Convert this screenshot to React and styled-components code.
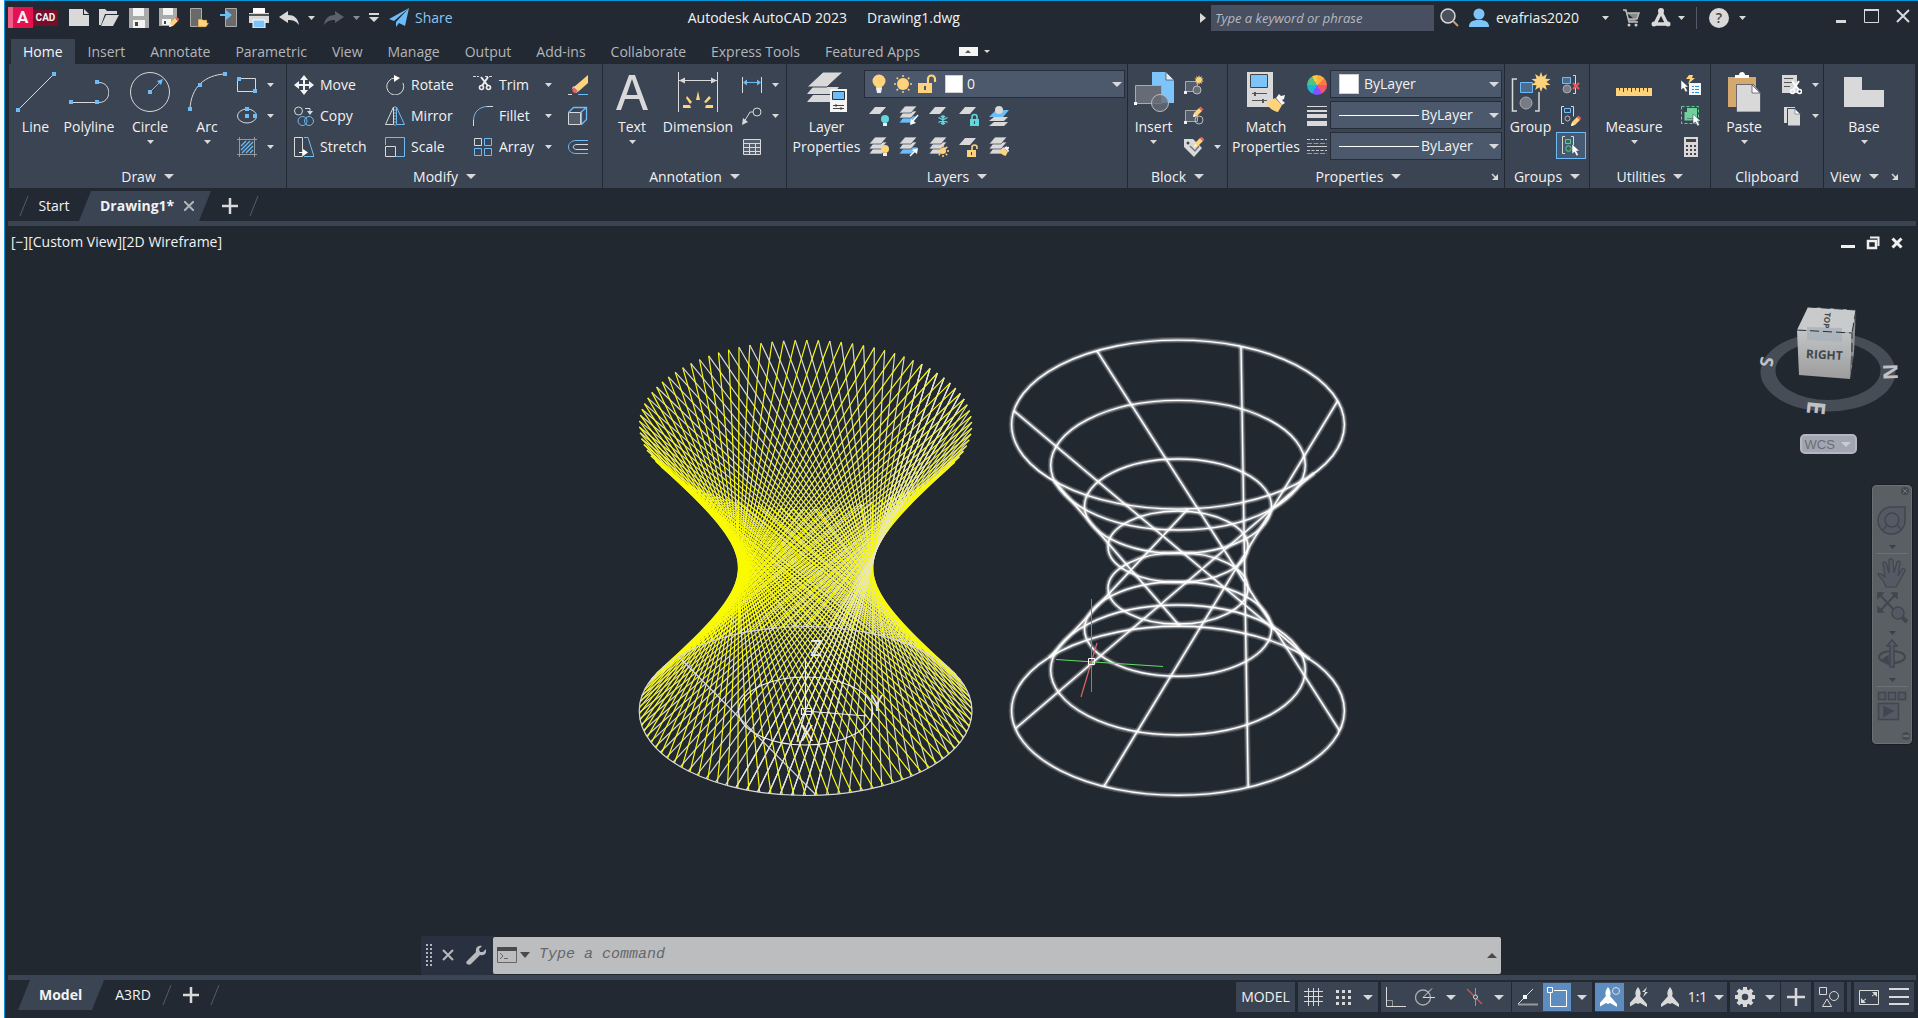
import React, { useState } from 'react';
import styled, { createGlobalStyle, css } from 'styled-components';

const GlobalStyle = createGlobalStyle`
	* { box-sizing: border-box; }
	body {
		margin: 0;
		background: #f8f8f8;
		color: #f2f2f2;
		font-family: "Open Sans", "Noto Sans", sans-serif;
		font-size: 14px;
		line-height: 20px;
	}
	button, input, select { font: inherit; color: inherit; }
	svg { display: block; flex: none; }
`;

const L = '#d9d9d9';
const B = '#6cbcf7';
const Y = '#ffd37c';

/* ---------- layout ---------- */

const Shell = styled.div`
	display: flex;
	flex-direction: column;
	min-height: 100vh;
	margin-left: 4px;
	border-left: 1px solid #0696d7;
	border-top: 1px solid #0696d7;
	background: #222933;
`;

const Row = styled.div`
	display: flex;
	align-items: center;
`;

const Button = styled.button`
	display: flex;
	align-items: center;
	justify-content: center;
	flex: none;
	padding: 0;
	border: 0;
	background: none;
	width: ${(p) => (p.$w ? p.$w + 'px' : 'auto')};
	height: ${(p) => (p.$h ? p.$h + 'px' : 'auto')};
	cursor: pointer;
	white-space: nowrap;
	&:hover { filter: brightness(1.15); }
`;

/* ---------- title bar ---------- */

const TitleBar = styled.header`
	display: flex;
	align-items: center;
	height: 38px;
	padding: 0 0 4px 3px;
`;

const Logo = styled.div`
	display: flex;
	width: 50px;
	height: 22px;
	margin-right: 6px;
	font-weight: 700;
	font-family: Roboto, sans-serif;
`;

const LogoA = styled.span`
	width: 25px;
	height: 21px;
	padding-left: 4px;
	background: #e51050;
	border-left: 5px solid #ee5c87;
	font-size: 17px;
	line-height: 21px;
`;

const LogoCad = styled.span`
	width: 25px;
	height: 16px;
	margin-top: 3px;
	background: #750e2b;
	font-size: 10px;
	line-height: 16px;
	text-align: center;
`;

const ShareButton = styled(Button)`
	gap: 6px;
	margin-left: 5px;
	color: #8ac6f5;
`;

const TitleText = styled.div`
	flex: 1;
	display: flex;
	justify-content: center;
	gap: 20px;
	white-space: nowrap;
`;

const SearchBox = styled.input`
	width: 223px;
	height: 26px;
	padding: 0 4px;
	border: 0;
	background: #474f61;
	font-size: 13px;
	&::placeholder { color: #b5b9c0; font-style: italic; opacity: 1; }
`;

const UserButton = styled(Button)`
	justify-content: flex-start;
	gap: 7px;
	padding-left: 5px;
`;

const TitleRule = styled.span`
	width: 1px;
	height: 22px;
	margin: 0 7px;
	background: #545b68;
`;

const AppWindowButtons = styled.div`
	display: flex;
	margin: 0 0 4px 75px;
`;

/* ---------- ribbon ---------- */

const RibbonTabs = styled.nav`
	display: flex;
	gap: 1px;
	height: 25px;
	padding-left: 6px;
`;

const RibbonTab = styled(Button)`
	padding: 0 12px;
	color: ${(p) => (p.$active ? '#f5f5f5' : '#b3b6ba')};
	background: ${(p) => (p.$active ? '#3b4453' : 'none')};
`;

const RibbonToggle = styled(Button)`
	margin-left: 26px;
`;

const TabToggle = styled.span`
	display: flex;
	align-items: center;
	justify-content: center;
	width: 19px;
	height: 9px;
	background: #f4f4f4;
`;

const Ribbon = styled.div`
	display: flex;
	height: 124px;
	margin: 0 3px 0 4px;
	background: #3b4453;
`;

const PanelBox = styled.section`
	display: flex;
	flex-direction: column;
	flex: ${(p) => (p.$w ? `0 0 ${p.$w}px` : '1')};
	border-right: ${(p) => (p.$w ? '1px solid #222933' : '0')};
`;

const PanelBody = styled.div`
	display: flex;
	height: 101px;
	padding: 5px 0 0 ${(p) => p.$pad || 0}px;
`;

const PanelTitle = styled.div`
	display: flex;
	align-items: center;
	justify-content: center;
	height: 23px;
	gap: 8px;
	padding-right: ${(p) => (p.$inset ? 10 : 0)}px;
`;

const Launcher = styled(Button)`
	margin-left: ${(p) => (p.$push ? 'auto' : '4px')};
	margin-right: ${(p) => (p.$push ? '5px' : '0')};
`;

const PushLeft = styled.span`
	margin-left: auto;
	padding-left: 6px;
`;

const BigBox = styled.button`
	display: flex;
	flex-direction: column;
	align-items: center;
	flex: none;
	width: ${(p) => p.$w}px;
	height: 95px;
	padding: 3px 0 0;
	border: 0;
	background: none;
	cursor: pointer;
	line-height: 20px;
	white-space: nowrap;
	span { margin: 5px 0 3px; }
`;

const Column = styled.div`
	display: flex;
	flex-direction: column;
	width: ${(p) => (p.$w ? p.$w + 'px' : 'auto')};
	margin-left: ${(p) => p.$ml || 0}px;
`;

const Cell = styled(Button)`
	width: ${(p) => p.$w || 30}px;
	height: 31px;
`;

const ActiveCell = styled(Cell)`
	height: 27px;
	margin-top: 1px;
	background: #475a73;
	border: 1px solid #6cbcf7;
`;

const ToolGrid = styled.div`
	display: grid;
	grid-template-columns: 91px 88px 67px 28px 20px;
	grid-auto-rows: 31px;
`;

const Tool = styled(Button)`
	justify-content: flex-start;
	gap: 6px;
`;

const Combo = styled.div`
	position: relative;
	display: flex;
	align-items: center;
	width: ${(p) => p.$w}px;
	height: 28px;
	margin: 1px 0 2px;
	border: 1px solid #262d38;
	background: #4c586b;
	> *:not(select) { pointer-events: none; }
`;

const Select = styled.select`
	position: absolute;
	inset: 0;
	width: 100%;
	padding: 0 22px 0 ${(p) => p.$pad}px;
	border: 0;
	appearance: none;
	background: transparent;
	option { background: #3b4453; }
`;

const ComboArrow = styled.span`
	margin-left: auto;
	margin-right: 2px;
`;

const Swatch = styled.span`
	width: ${(p) => p.$s}px;
	height: ${(p) => p.$s}px;
	margin-left: 8px;
	background: #fff;
	border: 1px solid #d0d0d0;
`;

const Sample = styled.span`
	width: 80px;
	height: 1px;
	margin-left: 8px;
	background: #fff;
`;

const ComboIcons = styled.div`
	display: flex;
	gap: 4px;
	padding-left: 4px;
`;

const Wheel = styled.span`
	width: 20px;
	height: 20px;
	border-radius: 50%;
	background: conic-gradient(#ffb13d 0 45deg, #ff7a45 45deg 90deg, #f0566e 90deg 150deg, #8a4dff 150deg 210deg, #19b5d8 210deg 270deg, #4cc38a 270deg 330deg, #ffc93d 330deg);
`;

/* ---------- file tabs ---------- */

const FileTabs = styled.nav`
	display: flex;
	align-items: center;
	height: 33px;
	padding: 3px 0 0 14px;
`;

const SlantTab = styled.div`
	display: flex;
	align-items: center;
	height: 30px;
	width: ${(p) => p.$w}px;
	padding-left: 21px;
	gap: 10px;
	font-weight: 700;
	background: #3b4453;
	clip-path: polygon(12px 0, 100% 0, calc(100% - 12px) 100%, 0 100%);
`;

const Bar = styled.div`
	flex: none;
	height: 5px;
	margin: 0 2px 0 3px;
	background: #3b4453;
`;

/* ---------- viewport ---------- */

const Viewport = styled.main`
	position: relative;
	display: flex;
	flex: 1;
	min-height: 600px;
	background: #212830;
`;

const Canvas = styled.svg`
	flex: 1;
	min-width: 0;
	width: 100%;
`;

const ViewLabel = styled.div`
	position: absolute;
	left: 6px;
	top: 6px;
	white-space: nowrap;
`;

const WindowButtons = styled.div`
	position: absolute;
	right: 9px;
	top: 7px;
	display: flex;
`;

const CubeBox = styled.div`
	position: absolute;
	right: 0;
	top: 74px;
	width: 180px;
	display: flex;
	flex-direction: column;
	align-items: center;
`;

const Wcs = styled.button`
	display: flex;
	align-items: center;
	gap: 6px;
	width: 57px;
	height: 20px;
	margin-top: 16px;
	padding: 0 3px;
	border: 2px solid #b4b6c2;
	border-radius: 5px;
	background: #a3a5b2;
	color: #6a6d76;
	font: 13px "Liberation Sans", sans-serif;
`;

const NavBar = styled.div`
	position: absolute;
	right: 6px;
	top: 259px;
	display: flex;
	flex-direction: column;
	align-items: center;
	width: 40px;
	height: 259px;
	border: 1px solid #6b7072;
	border-radius: 4px;
	background: #595f62;
	box-shadow: 0 0 0 1px #1a1f27;
`;

const CommandLine = styled.div`
	position: absolute;
	left: 416px;
	right: 417px;
	bottom: 0;
	display: flex;
	align-items: center;
	height: 39px;
	padding-bottom: 1px;
	background: linear-gradient(to right, #293040 74px, transparent 74px);
	border-radius: 3px;
`;

const CommandField = styled.label`
	display: flex;
	align-items: center;
	flex: 1;
	height: 37px;
	padding: 0 4px;
	border-radius: 2px;
	background: #bcbdbf;
`;

const CommandInput = styled.input`
	flex: 1;
	min-width: 0;
	margin-left: 6px;
	border: 0;
	outline: 0;
	background: none;
	color: #333;
	font-family: "Liberation Mono", monospace;
	font-size: 15px;
	line-height: 24px;
	&::placeholder { color: #65676a; font-style: italic; opacity: 1; }
`;

/* ---------- status bar ---------- */

const StatusBar = styled.footer`
	display: flex;
	height: 38px;
	padding: 0 4px 0 13px;
`;

const LayoutTabs = styled.nav`
	display: flex;
	flex: 1;
	align-items: center;
	height: 30px;
`;

const StatusGroup = styled.div`
	display: flex;
	height: 30px;
	margin: 2px 0 0 ${(p) => (p.$tight ? 1 : 3)}px;
	min-width: 4px;
	background: #3b4453;
`;

const StatusCell = styled(Button)`
	height: 30px;
	${(p) => p.$on && css`
		height: 28px;
		margin-top: 1px;
		background: #5d8cc0;
	`}
`;

/* ---------- icons ---------- */

const Svg = ({ w = 20, h = w, children }) => (
	<svg width={w} height={h} viewBox={`0 0 ${w} ${h}`} fill="none" stroke="none">{children}</svg>
);

const Tri = ({ w = 7, color = L, up }) => {
	const h = Math.ceil(w / 2);
	return (
		<Svg w={w} h={h}><path fill={color} d={up ? `M0 ${h}H${w}L${w / 2} 0z` : `M0 0H${w}L${w / 2} ${h}z`} /></Svg>
	);
};

const Dot = ({ x, y, c = B }) => <rect x={x - 2} y={y - 2} width="4" height="4" fill={c} />;
const Slab = ({ x = 0, y = 0, c = L }) => <path d={`M${x + 6} ${y}h11l-6 7H${x}z`} fill={c} />;
const Slab3 = ({ colors = [L, L, L] }) => (
	<g>
		<path d="M5 10h14l-6 7H0z" fill={colors[2]} stroke="#3b4453" strokeWidth=".7" />
		<path d="M5 5h13l-6 7H0z" fill={colors[1]} stroke="#3b4453" strokeWidth=".7" />
		<path d="M6 0h12l-6 7H0z" fill={colors[0]} stroke="#3b4453" strokeWidth=".7" />
	</g>
);
const Pencil = ({ x, y }) => (
	<g transform={`translate(${x} ${y})`}>
		<path d="M0 9l1-4 5-5 3 3-5 5z" fill={Y} />
		<path d="M6 0l1.500-1.500 3 3L9 3z" fill="#ef5f5f" />
		<path d="M0 9l1-3 2 2z" fill="#fff" />
	</g>
);
const Cursor = ({ x, y }) => <path transform={`translate(${x} ${y})`} d="M0 0v10l2.500-2 2 4 2-1-2-4h3z" fill="#fff" stroke="#3b4453" strokeWidth=".5" />;
const Bulb = ({ x, y, c = Y }) => (
	<g><circle cx={x} cy={y} r="4" fill={c} /><rect x={x - 2} y={y + 4} width="4" height="3" fill="#eee" /></g>
);
const Sun = ({ x, y, r = 4, c = Y, ray = 3 }) => (
	<g stroke={c} strokeWidth="1.500">
		<circle cx={x} cy={y} r={r} fill={c} stroke="none" />
		{[0, 45, 90, 135, 180, 225, 270, 315].map((a) => (
			<path key={a} d={`M${x + r + 1} ${y}h${ray - 1}`} transform={`rotate(${a} ${x} ${y})`} />
		))}
	</g>
);
const Lock = ({ x, y, c, open }) => (
	<g>
		<path d={open ? `M${x + 5} ${y + 5}v-2.500a2.500 2.500 0 0 1 5 0v1.500` : `M${x + 2} ${y + 5}v-2a2.500 2.500 0 0 1 5 0v2`} stroke={c} strokeWidth="1.600" />
		<path d={`M${x} ${y + 5}h9v7h-9z`} fill={c} />
		<path d={`M${x + 4.5} ${y + 7}v3`} stroke="#3b4453" />
	</g>
);
const Star = ({ x, y, r }) => {
	const pts = [];
	for (let i = 0; i < 20; i++) {
		const a = (i * Math.PI) / 10;
		const q = i % 2 ? r * 0.55 : r;
		pts.push(`${x + q * Math.sin(a)},${y - q * Math.cos(a)}`);
	}
	return <polygon points={pts.join(' ')} fill={Y} />;
};
const Scissors = ({ x = 0, y = 0, c = '#eee' }) => (
	<g transform={`translate(${x} ${y})`} stroke={c} strokeWidth="1.600">
		<path d="M2 0l7 9M9 0L3 9" strokeWidth="2" />
		<circle cx="2.500" cy="10.500" r="2" /><circle cx="9.500" cy="10.500" r="2" />
	</g>
);
const Brush = ({ x, y, s = 1 }) => (
	<g transform={`translate(${x} ${y}) scale(${s})`}>
		<path d="M10 4l3-4 2 2 4-1-1 4-2 1 3 3-3 2z" fill="#f4f4f4" />
		<path d="M9 4l7 7-4 7C7 17 3 14 0 9z" fill={Y} />
	</g>
);

const icons = {
	newFile: <Svg><path d="M0 1h14v6h6v11H0z" fill={L} /><path d="M15 1l5 5h-5z" fill={L} /></Svg>,
	open: <Svg><path d="M0 17V1h6l2 2h10v3H6L2 17z" fill={L} /><path d="M7 7h13l-6 11H2z" fill={L} /></Svg>,
	save: <Svg><path d="M0 0h20v20H0z" fill="#aaa" /><path d="M4 0h11v8H4zM4 12h12v8H4z" fill="#f4f4f4" /><path d="M6 14h3v4H6z" fill="#444" /></Svg>,
	saveAs: <Svg><path d="M0 0h18v10l-8 8H0z" fill="#aaa" /><path d="M4 0h10v7H4zM3 11h9v6H3z" fill="#f4f4f4" /><path d="M5 13h2v3H5z" fill="#444" /><Pencil x={10} y={10} /></Svg>,
	openMobile: <Svg><path d="M1.500.500h11v18h-11z" fill="#6a6a6a" stroke="#aaa" /><path d="M9 19v-8h4l1 1h4v3h2l-3 4z" fill={Y} stroke="#7a5a20" strokeWidth=".5" /></Svg>,
	saveMobile: <Svg><path d="M6.500.500h11v18h-11z" fill="#6a6a6a" stroke="#aaa" /><path d="M1 6h6V2l6 5-6 5V8H1z" fill={B} /></Svg>,
	print: <Svg><path d="M4 0h12v5H4z" fill="#fff" /><path d="M0 5h20v10H0z" fill={L} /><path d="M0 6h20v2H0z" fill="#555" /><path d="M4 12h12v8H4z" fill="#7cc4fa" stroke="#fff" /></Svg>,
	undo: <Svg><path d="M0 9l9-6v4c6 0 10 3 11 10-3-4-6-5-11-5v3z" fill={L} /></Svg>,
	redo: <Svg><path d="M20 9l-9-6v4C5 7 1 10 0 17c3-4 6-5 11-5v3z" fill="#5c6069" /></Svg>,
	customize: <Svg w={10} h={10}><path d="M0 0h10v2H0zM0 4h10L5 9z" fill={L} /></Svg>,
	plane: <Svg><path d="M20 0L0 11l5 2zM20 0L7 14v5l3-4 6 3z" fill={B} /></Svg>,
	magnifier: <Svg><circle cx="9" cy="8" r="7" fill="#4b515c" stroke={L} strokeWidth="1.500" /><path d="M14 13l5 5" stroke="#c9a36a" strokeWidth="2" /></Svg>,
	user: <Svg><circle cx="10" cy="6" r="5.500" fill="#7cc4fa" /><path d="M0 19c0-5 3-6 7-7h6c4 1 7 2 7 7z" fill="#7cc4fa" /></Svg>,
	cart: <Svg><path d="M2 2h3l3 12h9M5 5h13l-2 6H7" stroke="#bbb" fill="#888" strokeWidth="1.500" /><circle cx="8" cy="17" r="1.500" fill="#ccc" /><circle cx="15" cy="17" r="1.500" fill="#ccc" /></Svg>,
	appStore: <Svg><path d="M10 4l6 12H4z" stroke={L} strokeWidth="3.500" /><circle cx="10" cy="3" r="3" fill={L} /><circle cx="3" cy="16" r="2.500" fill={L} /><circle cx="17" cy="16" r="2.500" fill={L} /></Svg>,
	minimize: <Svg w={16}><path d="M3 12h10v3H3z" fill={L} /></Svg>,
	maximize: <Svg w={16}><path d="M.5 1.500h14v13H.5z" stroke={L} /><path d="M0 2h15" stroke={L} strokeWidth="2" /></Svg>,
	close: <Svg w={16}><path d="M2 2l12 12M14 2L2 14" stroke={L} strokeWidth="2" /></Svg>,

	line: <Svg w={40}><path d="M2 38L38 2" stroke={L} /><Dot x={2} y={38} /><Dot x={38} y={2} /></Svg>,
	polyline: <Svg w={40}><path d="M2 30.500h26M30 30.500c13 0 13-20 0-20" stroke={L} /><Dot x={2} y={30} /><Dot x={28} y={30} /><Dot x={28} y={10} /></Svg>,
	circle: <Svg w={40}><circle cx="20" cy="20" r="19.500" stroke={L} /><path d="M20 20l9-9" stroke={B} /><path d="M33 7l-2 6-4-4z" fill={B} /><Dot x={20} y={20} /></Svg>,
	arc: <Svg w={40}><path d="M3 37C4 15 18 3 38 2" stroke={L} /><Dot x={3} y={37} /><Dot x={13} y={13} /><Dot x={38} y={2} /></Svg>,
	rect: <Svg><path d="M.5 3.500h18v13H.5z" stroke={L} /><Dot x={2} y={4} /><Dot x={18} y={16} /></Svg>,
	ellipse: <Svg><ellipse cx="10" cy="10" rx="9.500" ry="7" stroke={L} /><Dot x={10} y={10} /><Dot x={10} y={3} /><Dot x={18} y={10} /></Svg>,
	hatch: <Svg><path d="M0 2.500h20M0 17.500h20M2.500 0v20M17.500 0v20" stroke="#999" /><path d="M4 9l5-5M4 13l9-9M5 16L16 5M9 16l7-7M13 16l3-3" stroke={B} strokeWidth="1.300" /></Svg>,
	move: <Svg><path d="M10 0l4 5h-3v4h4V6l5 4-5 4v-3h-4v4h3l-4 5-4-5h3v-4H5v3l-5-4 5-4v3h4V5H6z" fill="#f4f4f4" /></Svg>,
	copy: <Svg><circle cx="4.500" cy="5" r="4" stroke={L} /><path d="M11 2.500h5V6" stroke={L} /><path d="M13 5h6l-3 4z" fill={L} /><circle cx="8.500" cy="15" r="4.500" stroke={B} /><circle cx="15" cy="15" r="4.500" stroke={B} /></Svg>,
	stretch: <Svg><path d="M.5.500h8v19h-8z" stroke={L} /><path d="M10 .5h4l6 19H10" stroke={B} /><path d="M5 15.500h6" stroke="#fff" /><path d="M9 12l5 3.500L9 19z" fill="#fff" /></Svg>,
	rotate: <Svg><path d="M10 3a8.500 8.500 0 1 0 8 5" stroke={L} /><path d="M9 0l6 3-6 4z" fill="#fff" /></Svg>,
	mirror: <Svg><path d="M8.500 1v17.500H.5z" stroke={L} /><path d="M11.500 1v17.500h8z" stroke={B} /><path d="M10 0v20" stroke="#aaa" strokeDasharray="2 1" /></Svg>,
	scale: <Svg><path d="M.5 8V.5h19v19H11" stroke={B} /><path d="M.5 9.500h10v10H.5z" stroke={L} /></Svg>,
	trim: <Svg><path d="M0 1.500h6M12 1.500h8" stroke={L} strokeDasharray="3 1" /><Scissors x={6} y={2} /></Svg>,
	fillet: <Svg><path d="M.5 20v-6" stroke={L} /><path d="M.5 14C1 5 7 1 14 .5" stroke={B} /><path d="M14 .500h6" stroke={L} /></Svg>,
	array: <Svg><path d="M1.500 1.500h7v7h-7z" stroke={L} /><path d="M11.500 1.500h7v7h-7zM1.500 11.500h7v7h-7zM11.500 11.500h7v7h-7z" stroke={B} /></Svg>,
	erase: <Svg><path d="M20 0v8l-9 8-5-4z" fill={Y} /><path d="M11 16l-5-5-2 2 4 5z" fill="#f4f4f4" /><path d="M6 12l4 4c-3 4-7 1-5-3z" fill="#ef5f5f" /><path d="M0 19.500h4" stroke={L} /><path d="M10 19.500h10" stroke={B} /></Svg>,
	explode: <Svg><path d="M.5 6.500h12v12H.5z" stroke={L} fill="#565e6b" /><path d="M.5 6.500l5-5h13v12l-5 5M12.500 6.500l6-5M13.500 6v13" stroke={B} strokeWidth="1.300" /></Svg>,
	offset: <Svg><path d="M20 3.500H8c-10 0-10 13 0 13h12" stroke={B} /><path d="M20 7.500H9c-5 0-5 5 0 5h11" stroke={L} /></Svg>,

	textA: <Svg w={40}><path d="M4 38L17 3h6l13 35h-5l-4-11H13L9 38zM14.500 23h11L20 7z" fill={L} fillRule="evenodd" /></Svg>,
	dimension: (
		<Svg w={40}>
			<path d="M.5 0v40M39.500 0v40M1 8.500h38" stroke={L} />
			<path d="M1 8.500l6-3v6zM39 8.500l-6-3v6z" fill={L} />
			<path d="M18 28l2-9 2 9zM14 30l-5-6-1 2 4 6zM26 30l5-6 2 2-5 5zM12 33l-7 0v3l8 0zM28 33l7 0v3h-8z" fill={Y} />
		</Svg>
	),
	dimLinear: <Svg><path d="M.5 2v16M19.500 2v16" stroke={L} /><path d="M2 7.500h16" stroke={B} /><path d="M1 7.500l4-3v6zM19 7.500l-4-3v6z" fill={B} /></Svg>,
	leader: <Svg><circle cx="15" cy="6" r="4" stroke={L} /><path d="M11 6H8L2 16" stroke={L} /><path d="M0 19l1-7 5 4z" fill={L} /></Svg>,
	table: <Svg><path d="M1.500 2.500h17v15h-17z" stroke={L} fill="#565e6b" /><path d="M1 6.500h18M1 10.500h18M1 14.500h18M7.500 7v11M13.500 7v11" stroke={L} /></Svg>,

	layerProps: (
		<Svg w={40}>
			<path d="M0 30l6-7h24l-6 7zM0 22l6-7h26l-6 7z" fill={L} />
			<path d="M0 15L16 0h20L20 15z" fill={L} stroke="#3b4453" />
			<path d="M23 17h17v23H23z" fill="#f4f4f4" />
			<path d="M25.500 19.500h12v8h-12z" fill="#6cbcf7" stroke="#333" />
			<path d="M26 33.500h11M26 36.500h11" stroke="#444" /><path d="M29 32v3M34 35v3" stroke="#444" />
		</Svg>
	),
	bulbBig: <Svg><circle cx="10" cy="7" r="6.500" fill={Y} /><path d="M7 12h6v2H7z" fill={Y} /><path d="M7 14h6l-1 5H8z" fill="#f0f0f0" /></Svg>,
	sunBig: <Svg><Sun x={10} y={10} r={6} ray={3} /></Svg>,
	lockBig: <Svg><path d="M11 9V5a3.500 3.500 0 0 1 7 0v3" stroke={Y} strokeWidth="2.200" /><path d="M1 9h14v10H1z" fill={Y} /><path d="M8 12v4" stroke="#4c586b" strokeWidth="2" /></Svg>,
	layOff: <Svg><Slab y={1} /><Bulb x={16} y={13} c="#62d6de" /></Svg>,
	layIso: <Svg><Slab3 colors={[L, L, B]} /><path d="M19 9l-6 7" stroke="#fff" strokeWidth="1.500" /><path d="M11 19l1-6 5 4z" fill="#fff" /></Svg>,
	layFreeze: <Svg><Slab y={1} /><path d="M14 9v10M9.500 11.500l9 5M18.500 11.500l-9 5M12 10l2 2 2-2M12 18l2-2 2 2" stroke="#62d6de" strokeWidth="1.400" /></Svg>,
	layLock: <Svg><Slab y={1} /><Lock x={11} y={8} c="#62d6de" /></Svg>,
	layCurrent: <Svg><path d="M0 20l5-4h14l-4 4zM0 15l5-4h14l-4 4z" fill={L} /><path d="M0 11l7-7h13l-6 7z" fill={B} /><circle cx="10" cy="4" r="4" fill={L} /></Svg>,
	layOn: <Svg><Slab3 /><Bulb x={16} y={12} /></Svg>,
	layUniso: <Svg><Slab3 colors={[L, L, B]} /><path d="M11 19l5-5" stroke="#fff" strokeWidth="1.500" /><path d="M19 11l-1 6-5-4z" fill="#fff" /></Svg>,
	layThaw: <Svg><Slab3 /><Sun x={14} y={14} r={3} ray={3} /></Svg>,
	layUnlock: <Svg><Slab y={1} /><Lock x={8} y={8} c={Y} open /></Svg>,
	layMatch: <Svg><Slab3 /><Brush x={10} y={9} s={0.55} /></Svg>,

	insert: (
		<Svg w={40}>
			<path d="M18 0h14l8 8v23H18z" fill="#7cc4fa" /><path d="M32 0v8h8z" fill="#dff0fc" stroke="#3b4453" strokeWidth=".7" />
			<path d="M1.500 13.500h26v18h-26z" fill="#666b76" stroke="#aaa" /><path d="M0 30h3v3H0z" fill="#fff" />
			<circle cx="26" cy="31" r="8.500" fill="#666b76" stroke="#bbb" fillOpacity=".8" />
		</Svg>
	),
	blockCreate: <Svg><path d="M1.500 6.500h12v10h-12z" fill="#565e6b" stroke="#aaa" /><circle cx="13" cy="15" r="4" fill="#666b76" stroke="#bbb" /><Star x={15} y={5} r={5} /><path d="M0 16h3v3H0z" fill="#eee" /></Svg>,
	blockEdit: <Svg><path d="M1.500 4.500h12v11h-12z" fill="#565e6b" stroke="#aaa" /><circle cx="15" cy="14" r="4" stroke="#bbb" /><Pencil x={9} y={2} /><path d="M0 15h3v3H0z" fill="#eee" /></Svg>,
	tag: <Svg><path d="M0 2h9l9 9-8 9L0 10z" fill={L} /><circle cx="4" cy="6" r="1.500" fill="#3b4453" /><path d="M6 9l5 5 4-5" stroke="#777" strokeWidth="1.500" /><Pencil x={10} y={1} /></Svg>,

	match: (
		<Svg w={40}>
			<path d="M1 0h26v35H1z" fill={L} /><path d="M4.500 2.500h17v13h-17z" fill="#7cc4fa" stroke="#444" />
			<path d="M6 21.500h15M6 28.500h15" stroke="#555" /><path d="M9 20v4M17 27v4" stroke="#555" strokeWidth="2" /><Brush x={20} y={22} />
		</Svg>
	),
	lineweight: <Svg><path d="M0 0h20v1H0zM0 4h20v2H0zM0 8h20v4H0zM0 15h20v5H0z" fill={L} /></Svg>,
	linetype: <Svg><path d="M0 2.500h20M0 13.500h20" stroke="#ccc" strokeDasharray="3 1.500" /><path d="M0 6.500h20M0 16.500h20" stroke="#999" strokeDasharray="5 1.500" /><path d="M0 9.500h20" stroke="#ccc" /></Svg>,

	group: (
		<Svg w={40}>
			<path d="M6 7H1.500v32H6M24 39h4V20" stroke={L} strokeWidth="1.500" /><path d="M9.500 10.500h12v10h-12z" fill="#4e6d8c" stroke={B} />
			<circle cx="15" cy="31" r="6" fill="#777c86" stroke="#aaa" /><Star x={30} y={10} r={10} />
		</Svg>
	),
	ungroup: <Svg><path d="M1.500 2.500h8v6h-8z" fill="#4e6d8c" stroke={B} /><circle cx="6" cy="14" r="4" fill="#777c86" stroke="#aaa" /><path d="M12 .500h2.500v18H12" stroke={L} /><path d="M12 8l6 6M18 8l-6 6" stroke="#f0555e" strokeWidth="2" /></Svg>,
	groupEdit: <Svg><path d="M3 .500H.5v17H3M10 .500h2.500v10" stroke={L} /><path d="M3.500 2.500h6v4h-6z" stroke={B} /><circle cx="6.500" cy="12.500" r="2.500" stroke="#bbb" /><Pencil x={10} y={11} /></Svg>,
	groupSelect: <Svg><path d="M4 .500H1.500v17H4M10 .500h2.500v9" stroke={L} /><path d="M4.500 3.500h5v4h-5z" fill="#356b56" stroke="#5ed092" /><circle cx="7.500" cy="12.500" r="2.800" fill="#356b56" stroke="#5ed092" /><Cursor x={11} y={8} /></Svg>,

	measure: <Svg w={40}><path d="M2 16h36v8H2z" fill={Y} /><path d="M5.500 16v2.500M9.500 16v4M13.500 16v2.500M17.500 16v4M21.500 16v2.500M25.500 16v4M29.500 16v2.500M33.500 16v4" stroke="#444" /></Svg>,
	quickSelect: <Svg><path d="M8 0h4l-1 3h3L7 9l2-5H5z" fill={Y} /><path d="M8 8h12v12H8z" fill="#f4f4f4" /><path d="M11 11.500h2M11 14.500h2M11 17.500h2M14 11.500h4M14 14.500h4M14 17.500h4" stroke="#2b8fd8" /><Cursor x={0} y={5} /></Svg>,
	selectAll: <Svg><path d="M.5.500h17v17H.5z" stroke="#5ed092" strokeDasharray="3 2" /><path d="M3.500 6v8.500H12v-2H6V6z" fill="#70cf9a" /><path d="M6 2h10v10H6z" fill="#70cf9a" /><Cursor x={12} y={8} /></Svg>,
	calculator: <Svg><path d="M3 0h14v20H3z" fill={L} /><path d="M5 2h10v3H5z" fill="#444" /><path d="M5 8h2v2H5zM9 8h2v2H9zM13 8h2v2h-2zM5 12h2v2H5zM9 12h2v2H9zM13 12h2v2h-2zM5 16h2v2H5zM9 16h2v2H9zM13 16h2v2h-2z" fill="#444" /></Svg>,

	paste: (
		<Svg w={40}>
			<path d="M4 5h28v30H4z" fill="#d5a86e" /><path d="M11 6V3h4c0-4 6-4 6 0h4v3z" fill="#fff" />
			<path d="M12.500 12.500h17l7 8V40h-24z" fill={L} stroke="#3b4453" strokeWidth=".7" /><path d="M28 13v8h8z" fill="#fff" stroke="#3b4453" strokeWidth=".7" />
		</Svg>
	),
	cut: <Svg><path d="M0 0h15v18H0z" fill={L} /><path d="M2 3.500h9M2 7.500h9M2 11.500h6" stroke="#555" /><Scissors x={8} y={6} c="#fff" /></Svg>,
	copyClip: <Svg><path d="M2 1h11v16H2z" fill={L} /><path d="M5.500 2.500h8l5 5V20h-13z" fill={L} stroke="#3b4453" /><path d="M13 3v5h5z" fill="#fff" stroke="#3b4453" strokeWidth=".5" /></Svg>,
	base: <Svg w={40}><path d="M0 5h18v13h22v17H0z" fill={L} /></Svg>,
	launcher: <Svg w={8}><path d="M1 1l4 4" stroke={L} strokeWidth="1.500" /><path d="M7 1v6H1z" fill={L} /></Svg>,

	tabClose: <Svg w={10}><path d="M0 0l10 10M10 0L0 10" stroke="#b0b3b8" strokeWidth="2" /></Svg>,
	plus: <Svg w={16}><path d="M8 0v16M0 8h16" stroke={L} strokeWidth="2.500" /></Svg>,
};

const Slash = () => (
	<Svg w={10} h={20}><path d="M1 20L9 0" stroke="#565d69" /></Svg>
);

/* ---------- ribbon pieces ---------- */

const Panel = ({ title, w, pad, launcher, noArrow, children }) => (
	<PanelBox $w={w}>
		<PanelBody $pad={pad}>{children}</PanelBody>
		<PanelTitle $inset={launcher && !w}>
			{launcher && w ? <PushLeft>{title}</PushLeft> : <span>{title}</span>}
			{!noArrow && <Tri w={10} />}
			{launcher && <Launcher $push={!!w} aria-label={`${title} settings`}>{icons.launcher}</Launcher>}
		</PanelTitle>
	</PanelBox>
);

const Big = ({ icon, label, label2, w, arrow }) => (
	<BigBox $w={w}>
		{icons[icon]}
		<span>{label}{label2 && <><br />{label2}</>}</span>
		{arrow && <Tri />}
	</BigBox>
);

const IconCell = ({ icon, w }) => <Cell $w={w} aria-label={icon}>{icons[icon]}</Cell>;
const ArrowCell = ({ w = 16, label }) => <Cell $w={w} aria-label={label || 'More'}><Tri /></Cell>;

const modifyTools = [
	['move', 'Move'], ['rotate', 'Rotate'], ['trim', 'Trim', 'erase'],
	['copy', 'Copy'], ['mirror', 'Mirror'], ['fillet', 'Fillet', 'explode'],
	['stretch', 'Stretch'], ['scale', 'Scale'], ['array', 'Array', 'offset'],
];

const LayerSelect = () => (
	<Combo $w={261}>
		<ComboIcons>{icons.bulbBig}{icons.sunBig}{icons.lockBig}</ComboIcons>
		<Swatch $s={18} />
		<Select $pad={102} aria-label="Layer" defaultValue="0"><option>0</option></Select>
		<ComboArrow><Tri w={10} /></ComboArrow>
	</Combo>
);

const PropSelect = ({ label, line }) => (
	<Combo $w={172}>
		{line ? <Sample /> : <Swatch $s={20} />}
		<Select $pad={line ? 90 : 33} aria-label={label} defaultValue="ByLayer">
			<option>ByLayer</option>
			<option>ByBlock</option>
		</Select>
		<ComboArrow><Tri w={10} /></ComboArrow>
	</Combo>
);

const HomeRibbon = () => (
	<Ribbon>
		<Panel title="Draw" w={278} pad={0}>
			<Big icon="line" label="Line" w={53} />
			<Big icon="polyline" label="Polyline" w={54} />
			<Big icon="circle" label="Circle" w={68} arrow />
			<Big icon="arc" label="Arc" w={46} arrow />
			<Column $ml={2}>
				{['rect', 'ellipse', 'hatch'].map((i) => (
					<Row key={i}><IconCell icon={i} /><ArrowCell /></Row>
				))}
			</Column>
		</Panel>
		<Panel title="Modify" w={316} pad={7}>
			<ToolGrid>
				{modifyTools.map(([icon, label, extra]) => (
					<React.Fragment key={icon}>
						<Tool>{icons[icon]}{label}</Tool>
						{extra && <ArrowCell label={`${label} options`} />}
						{extra && <IconCell icon={extra} w={20} />}
					</React.Fragment>
				))}
			</ToolGrid>
		</Panel>
		<Panel title="Annotation" w={184} pad={2}>
			<Big icon="textA" label="Text" w={54} arrow />
			<Big icon="dimension" label="Dimension" w={78} />
			<Column>
				<Row><IconCell icon="dimLinear" /><ArrowCell /></Row>
				<Row><IconCell icon="leader" /><ArrowCell /></Row>
				<IconCell icon="table" />
			</Column>
		</Panel>
		<Panel title="Layers" w={341} pad={2}>
			<Big icon="layerProps" label="Layer" label2="Properties" w={75} />
			<Column>
				<LayerSelect />
				<Row>{['layOff', 'layIso', 'layFreeze', 'layLock', 'layCurrent'].map((i) => <IconCell key={i} icon={i} />)}</Row>
				<Row>{['layOn', 'layUniso', 'layThaw', 'layUnlock', 'layMatch'].map((i) => <IconCell key={i} icon={i} />)}</Row>
			</Column>
		</Panel>
		<Panel title="Block" w={100}>
			<Big icon="insert" label="Insert" w={51} arrow />
			<Column>
				<IconCell icon="blockCreate" />
				<IconCell icon="blockEdit" />
				<Row><IconCell icon="tag" /><ArrowCell /></Row>
			</Column>
		</Panel>
		<Panel title="Properties" w={277} launcher>
			<Big icon="match" label="Match" label2="Properties" w={76} />
			<Column $w={26}>
				<Cell $w={26} aria-label="Color"><Wheel /></Cell>
				<IconCell icon="lineweight" w={26} />
				<IconCell icon="linetype" w={26} />
			</Column>
			<Column>
				<PropSelect label="Object color" />
				<PropSelect label="Lineweight" line />
				<PropSelect label="Linetype" line />
			</Column>
		</Panel>
		<Panel title="Groups" w={85}>
			<Big icon="group" label="Group" w={51} />
			<Column>
				<IconCell icon="ungroup" />
				<IconCell icon="groupEdit" />
				<ActiveCell aria-label="groupSelect">{icons.groupSelect}</ActiveCell>
			</Column>
		</Panel>
		<Panel title="Utilities" w={121} pad={6}>
			<Big icon="measure" label="Measure" w={76} arrow />
			<Column $ml={4}>
				<IconCell icon="quickSelect" />
				<IconCell icon="selectAll" />
				<IconCell icon="calculator" />
			</Column>
		</Panel>
		<Panel title="Clipboard" w={113} noArrow>
			<Big icon="paste" label="Paste" w={66} arrow />
			<Column>
				<Row><IconCell icon="cut" /><ArrowCell /></Row>
				<Row><IconCell icon="copyClip" /><ArrowCell /></Row>
			</Column>
		</Panel>
		<Panel title="View" pad={4} launcher>
			<Big icon="base" label="Base" w={72} arrow />
		</Panel>
	</Ribbon>
);

/* ---------- drawing ---------- */

const RX = 166.4;
const RY = 84.5;
const TOP = 424.6;
const BOTTOM = 711;

const rim = (cx, cy, deg) => {
	const a = (deg * Math.PI) / 180;
	return [cx + RX * Math.cos(a), cy - RY * Math.sin(a)];
};

const ruling = (cx, deg, twist) => {
	const [x1, y1] = rim(cx, TOP, deg);
	const [x2, y2] = rim(cx, BOTTOM, deg + twist);
	return `M${x1.toFixed(1)} ${y1.toFixed(1)}L${x2.toFixed(1)} ${y2.toFixed(1)}`;
};

const steps = Array.from({ length: 90 }, (_, i) => i * 4 + 1.6);
const TWIST = 132.4;
const yellowLines = steps.map((d) => ruling(805.6, d, TWIST)).join('');
const whiteLines = steps.map((d) => ruling(805.6, d, -TWIST)).join('');
// the white rulings that pass in front, right of the axis
const frontWhite = steps
	.filter((d) => d > 14 && d < 46)
	.map((d) => ruling(805.6, d, -TWIST))
	.join('');

const rings = [
	[166.4, 84.5, 424.6], [127.3, 64.8, 465.2], [93.5, 47.2, 506.2], [70, 35.7, 546.7],
	[70, 35.7, 588.3], [93.5, 47.3, 629], [127.3, 65, 670], [166.4, 84.5, 710.8],
];
const meridians = Array.from({ length: 7 }, (_, i) => ruling(1178, 170.6 - (i * 360) / 7, -132.8)).join('');

const Wireframe = () => (
	<>
		{rings.map(([rx, ry, cy]) => <ellipse key={cy} cx="1178" cy={cy} rx={rx} ry={ry} />)}
		<path d={meridians} />
	</>
);

const Drawing = () => (
	<Canvas viewBox="5 226 1913 749" fill="none">
		<g strokeWidth="1.200">
			<path d={whiteLines} stroke="#d8d8d8" />
			<path d={frontWhite} stroke="#e4e4e4" />
			<path d={yellowLines} stroke="#fafa00" />
			<path d={frontWhite} stroke="#e4e4e4" strokeWidth=".6" />
			<ellipse cx="805.600" cy="711" rx={RX} ry={RY} stroke="#d8d8d8" />
			<ellipse cx="805.600" cy="711" rx="67" ry="34" stroke="#f0f0f0" />
			<path d="M677 655L815 794" stroke="#d8d8d8" />
			<path d="M805.500 658v57M805 711l62 5M805 713l-8 29" stroke="#eee" />
			<path d="M801.500 708.500h10v6h-10z" stroke="#eee" />
		</g>
		<g fill="#eee" fontFamily="Open Sans" fontSize="21">
			<text x="810" y="656">Z</text>
			<text x="801" y="741">X</text>
			<text x="871" y="711">Y</text>
		</g>
		<g stroke="#fff" strokeOpacity=".18" strokeWidth="6"><Wireframe /></g>
		<g stroke="#fff" strokeOpacity=".35" strokeWidth="3.500"><Wireframe /></g>
		<g stroke="#fff" strokeWidth="1.400"><Wireframe /></g>
		<path d="M1091.500 599v93" stroke="#7b74e8" />
		<path d="M1056 659.500l107 7" stroke="#62dd62" strokeWidth="1.200" />
		<path d="M1097 643l-16 54" stroke="#e06464" strokeWidth="1.200" />
		<path d="M1088.500 658.500h6v6h-6z" stroke="#fff" />
	</Canvas>
);

const ViewCube = () => (
	<CubeBox>
		<svg width="172" height="118" viewBox="1742 300 172 118" fontFamily="Open Sans" fontWeight="700">
			<defs>
				<linearGradient id="face" x1="0" y1="0" x2="0" y2="1">
					<stop offset="0" stopColor="#c2c4c6" />
					<stop offset="1" stopColor="#9c9c9c" />
				</linearGradient>
			</defs>
			<path fillRule="evenodd" fill="#474d56" d="M1760.500 372a67.500 39.500 0 1 0 135 0a67.500 39.500 0 1 0 -135 0zM1775.500 370.500a52.500 29.500 0 1 0 105 0a52.500 29.500 0 1 0 -105 0z" />
			<path d="M1808 307l48 3-4 23-55-3z" fill="#c9cacb" />
			<path d="M1797 330l55 3-2 46-51-4z" fill="url(#face)" />
			<path d="M1856 310l-4 23-2 46 4-26z" fill="#8e9092" />
			<path d="M1807 327l35 1v14l-35-2z" fill="#a9b2ba" opacity=".8" />
			<path d="M1797 330l55 3v46M1856 310l-4 23M1808 307l48 3v16" stroke="#2b3038" strokeWidth="1" strokeDasharray="9 4" fill="none" />
			<text x="1806" y="359" fontSize="12" fill="#41464d" transform="rotate(3 1824 355)">RIGHT</text>
			<text x="1825" y="312" fontSize="8" fill="#41464d" transform="rotate(96 1825 312)">TOP</text>
			<g fill="#bfc1c4">
				<text x="1761" y="356" fontSize="18" transform="rotate(98 1761 356)">S</text>
				<text x="1883" y="364" fontSize="20" transform="rotate(88 1883 364)">N</text>
				<text x="1808" y="400" fontSize="25" transform="rotate(96 1808 400)">E</text>
			</g>
		</svg>
		<Wcs>WCS <Tri w={10} color="#c9cbd6" /></Wcs>
	</CubeBox>
);

const NavTools = () => (
	<NavBar>
		<Svg w={38} h={257}>
			<g stroke="#41464f" strokeWidth="1.500" fill="#535a63">
				<circle cx="32" cy="5" r="4" fill="#454a50" stroke="none" />
				<path d="M30 3l4 4M34 3l-4 4" stroke="#70767a" strokeWidth="1" />
				<path d="M19 21h13v14a13.500 13.500 0 1 1-13-14z" />
				<circle cx="19" cy="34" r="7" /><path d="M14 39l-4 5M24 39l5 5" />
				<path d="M13 101c-2-8-8-11-8-13 3-2 5 2 7 3l-2-14c2-2 4 0 4 3l2 7 0-13c2-2 4-1 4 1l1 12 3-11c2-2 4 0 3 2l-2 12 4-7c2-1 3 0 3 2l-6 11-3 5z" strokeWidth="1.200" />
				<path d="M6 108l17 18M23 108L6 126" strokeWidth="2" />
				<path d="M5 107h5l-5 5zM24 107h-5l5 5zM5 126h5l-5-5z" fill="#41464f" />
				<circle cx="25" cy="127" r="6" /><path d="M29 131l5 5" strokeWidth="4" />
				<ellipse cx="19" cy="171" rx="13" ry="6" fill="none" strokeWidth="2" />
				<path d="M19 154l5 6h-3v21h-4v-21h-3z" /><path d="M9 174l6-4v8z" fill="#41464f" />
				<path d="M5.500 206.500h7v7h-7zM15.500 206.500h7v7h-7zM25.500 206.500h7v7h-7zM5.500 217.500h20v16h-20z" />
				<path d="M11 221l9 4-9 5z" fill="#41464f" />
				<circle cx="33" cy="250" r="4" fill="#454a50" stroke="none" />
				<path d="M30 250h6" stroke="#70767a" />
			</g>
			<path d="M16 59h7l-3.500 4zM16 145h7l-3.500 4zM16 192h7l-3.500 4z" fill="#3b4047" />
			<path d="M3 67.500h32M3 200.500h32" stroke="#6b7174" />
		</Svg>
	</NavBar>
);

/* ---------- status icons ---------- */

const person = 'M10 0c3 4 3 7 2 9l7 8v3l-7-4-2 1-2-1-7 4v-3l7-8C7 7 7 4 10 0z';

const status = {
	grid: <Svg><path d="M5.500 1v18M10.500 1v18M15.500 1v18M1 4.500h19M1 9.500h19M1 14.500h19" stroke={L} /></Svg>,
	snap: <Svg><path d="M3 3h3v3H3zM9 3h3v3H9zM15 3h3v3h-3zM3 9h3v3H3zM9 9h3v3H9zM15 9h3v3h-3zM3 15h3v3H3zM9 15h3v3H9zM15 15h3v3h-3z" fill={L} /></Svg>,
	ortho: <Svg><path d="M.5 0v19.500H20" stroke={L} /><path d="M1 13.500h5.500V19" stroke="#999" /></Svg>,
	polar: <Svg><circle cx="8" cy="10.500" r="7.500" stroke="#aaa" strokeWidth="1.300" /><path d="M8 10.500h12M8 10.500l9-9" stroke={L} /></Svg>,
	isodraft: <Svg><path d="M10.500 1v18" stroke="#4cc36c" /><path d="M2 2l15 15" stroke="#c65a5a" strokeWidth="1.300" /><circle cx="10.500" cy="10" r="2" stroke={L} fill="#3b4453" /></Svg>,
	track: <Svg><path d="M0 17.500h20" stroke="#999" strokeWidth="2" /><path d="M0 17L15 2" stroke={L} /><Dot x={7} y={10} c="#fff" /></Svg>,
	osnap: <Svg><path d="M3.500 6v13.500h16v-16H7" stroke="#fff" /><path d="M.5.500h5v5h-5z" stroke="#fff" /></Svg>,
	annoVis: <Svg><path d={person} fill="#fff" transform="translate(-2 0)" /><circle cx="16" cy="4" r="3.500" stroke="#ddd" fill="#5d8cc0" /></Svg>,
	annoAuto: <Svg><path d={person} fill={L} transform="translate(-2 0)" /><path d="M17 0l-5 5h3l-2 5 5-5h-3z" fill={L} /></Svg>,
	anno: <Svg><path d={person} fill={L} /></Svg>,
	gear: (
		<Svg>
			<circle cx="10" cy="10" r="5.500" stroke={L} strokeWidth="4.500" />
			{[0, 45, 90, 135].map((a) => <path key={a} d="M10 0v4M10 16v4" stroke={L} strokeWidth="4" transform={`rotate(${a} 10 10)`} />)}
		</Svg>
	),
	add: <Svg><path d="M10 1v18M1 10h18" stroke={L} strokeWidth="2.500" /></Svg>,
	isolate: <Svg><path d="M.5.500h7v7h-7z" stroke={L} /><circle cx="15" cy="9" r="4.500" stroke={L} /><path d="M8 12l4.500 7.500h-9z" stroke={L} /></Svg>,
	full: <Svg><path d="M.5 3.500h19v14H.5z" stroke={L} /><path d="M18 5v5l-5-5zM2 16v-5l5 5z" fill={L} /><path d="M16 7l-3 2M4 14l3-2" stroke={L} /></Svg>,
	menu: <Svg><path d="M0 1h20v2H0zM0 9h20v2H0zM0 16h20v2H0z" fill={L} /></Svg>,
};

const SC = ({ icon, w, on }) => <StatusCell $w={w} $on={on} aria-label={icon}>{status[icon]}</StatusCell>;
const SA = ({ w }) => <StatusCell $w={w} aria-label="Options"><Tri w={10} /></StatusCell>;

const tabs = [
	'Home', 'Insert', 'Annotate', 'Parametric', 'View', 'Manage', 'Output',
	'Add-ins', 'Collaborate', 'Express Tools', 'Featured Apps',
];

const quickAccess = ['newFile', 'open', 'save', 'saveAs', 'openMobile', 'saveMobile', 'print', 'undo'];

const App = () => {
	const [tab, setTab] = useState('Home');
	const [command, setCommand] = useState('');

	return (
		<>
			<GlobalStyle />
			<Shell>
				<TitleBar>
					<Logo><LogoA>A</LogoA><LogoCad>CAD</LogoCad></Logo>
					{quickAccess.map((i) => <Button key={i} $w={30} aria-label={i}>{icons[i]}</Button>)}
					<Button $w={15} aria-label="Undo list"><Tri /></Button>
					<Button $w={30} aria-label="redo">{icons.redo}</Button>
					<Button $w={15} aria-label="Redo list"><Tri color="#8a8d93" /></Button>
					<Button $w={20} aria-label="customize">{icons.customize}</Button>
					<ShareButton>{icons.plane}Share</ShareButton>
					<TitleText><span>Autodesk AutoCAD 2023</span><span>Drawing1.dwg</span></TitleText>
					<Button $w={16} aria-label="Collapse search"><Svg w={6} h={10}><path d="M0 0l6 5-6 5z" fill={L} /></Svg></Button>
					<SearchBox aria-label="Search" placeholder="Type a keyword or phrase" />
					<Button $w={30} aria-label="Search">{icons.magnifier}</Button>
					<UserButton $w={133}>{icons.user}evafrias2020</UserButton>
					<Button $w={16} aria-label="Account menu"><Tri /></Button>
					<Button $w={36} aria-label="cart">{icons.cart}</Button>
					<Button $w={24} aria-label="appStore">{icons.appStore}</Button>
					<Button $w={16} aria-label="App menu"><Tri /></Button>
					<TitleRule />
					<Button $w={30} aria-label="Help">
						<Svg><circle cx="10" cy="10" r="10" fill={L} /><text x="10" y="15" fontSize="14" textAnchor="middle" fontFamily="Open Sans" fontWeight="600" fill="#444">?</text></Svg>
					</Button>
					<Button $w={16} aria-label="Help menu"><Tri /></Button>
					<AppWindowButtons>
						<Button $w={31} aria-label="Minimize">{icons.minimize}</Button>
						<Button $w={31} aria-label="Maximize">{icons.maximize}</Button>
						<Button $w={31} aria-label="Close">{icons.close}</Button>
					</AppWindowButtons>
				</TitleBar>
				<RibbonTabs>
					{tabs.map((t) => (
						<RibbonTab key={t} $active={t === tab} onClick={() => setTab(t)}>{t}</RibbonTab>
					))}
					<RibbonToggle aria-label="Minimize ribbon"><TabToggle><Tri w={6} up color="#555" /></TabToggle></RibbonToggle>
					<Button $w={16} aria-label="Ribbon menu"><Tri w={6} /></Button>
				</RibbonTabs>
				<HomeRibbon />
				<FileTabs>
					<Slash />
					<Button $w={50}>Start</Button>
					<SlantTab $w={132}>Drawing1* <Button aria-label="Close tab">{icons.tabClose}</Button></SlantTab>
					<Button $w={38} aria-label="New tab">{icons.plus}</Button>
					<Slash />
				</FileTabs>
				<Bar />
				<Viewport>
					<Drawing />
					<ViewLabel>[−][Custom View][2D Wireframe]</ViewLabel>
					<WindowButtons>
						<Button $w={24} $h={20} aria-label="Minimize view"><Svg w={16}><path d="M0 10h14v3H0z" fill="#f0f0f0" /></Svg></Button>
						<Button $w={24} $h={20} aria-label="Restore view"><Svg w={16}><path d="M5 2.500h8.500V11" stroke="#f0f0f0" strokeWidth="2" /><path d="M3 6h8v7H3z" stroke="#f0f0f0" strokeWidth="2.500" /></Svg></Button>
						<Button $w={24} $h={20} aria-label="Close view"><Svg w={16}><path d="M3.500 3.500l9 9M12.500 3.500l-9 9" stroke="#f0f0f0" strokeWidth="3" /></Svg></Button>
					</WindowButtons>
					<ViewCube />
					<NavTools />
					<CommandLine>
						<Button $w={16} aria-label="Drag"><Svg w={6} h={22}><path d="M1 0v22M5 0v22" stroke="#b0b3b8" strokeWidth="2" strokeDasharray="2 2" /></Svg></Button>
						<Button $w={22} aria-label="Close command line"><Svg w={12}><path d="M1 1l10 10M11 1L1 11" stroke="#b8babd" strokeWidth="2" /></Svg></Button>
						<Button $w={34} aria-label="Command settings">
							<Svg><path d="M1 19c-1-1-1-2 0-3l9-9c-1-4 2-7 6-6l-3 3 1 3 3 0 3-3c1 5-2 7-6 6l-9 9c-1 1-3 1-4 0z" fill="#b8babd" /></Svg>
						</Button>
						<CommandField>
							<Svg h={16}><path d="M.5.500h19v15H.5z" stroke="#666" /><path d="M0 0h20v4H0z" fill="#4a4a4a" /><path d="M3 6l3 3-3 3M7 11.500h4" stroke="#666" /></Svg>
							<Svg w={14} h={6}><path d="M3 0h10L8 6z" fill="#4a4a4a" /></Svg>
							<CommandInput
								aria-label="Command"
								placeholder="Type a command"
								value={command}
								onChange={(e) => setCommand(e.target.value)}
							/>
							<Tri w={10} up color="#4a4a4a" />
						</CommandField>
					</CommandLine>
				</Viewport>
				<Bar />
				<StatusBar>
					<LayoutTabs>
						<SlantTab $w={86}>Model</SlantTab>
						<Button $w={58}>A3RD</Button>
						<Slash />
						<Button $w={38} aria-label="New layout">{icons.plus}</Button>
						<Slash />
					</LayoutTabs>
					<StatusGroup><StatusCell $w={59}>MODEL</StatusCell></StatusGroup>
					<StatusGroup><SC icon="grid" w={29} /><SC icon="snap" w={31} /><SA w={20} /></StatusGroup>
					<StatusGroup><SC icon="ortho" w={30} /><SC icon="polar" w={28} /><SA w={24} /><SC icon="isodraft" w={24} /><SA w={24} /></StatusGroup>
					<StatusGroup $tight><SC icon="track" w={31} /><SC icon="osnap" w={28} on /><SA w={21} /></StatusGroup>
					<StatusGroup><SC icon="annoVis" w={29} on /><SC icon="annoAuto" w={31} /><SC icon="anno" w={29} /><StatusCell $w={27}>1:1</StatusCell><SA w={16} /></StatusGroup>
					<StatusGroup><SC icon="gear" w={30} /><SA w={20} /></StatusGroup>
					<StatusGroup $tight><SC icon="add" w={30} /></StatusGroup>
					<StatusGroup><SC icon="isolate" w={30} /></StatusGroup>
					<StatusGroup />
					<StatusGroup><SC icon="full" w={30} /><SC icon="menu" w={30} /></StatusGroup>
				</StatusBar>
			</Shell>
		</>
	);
};

export default App;
